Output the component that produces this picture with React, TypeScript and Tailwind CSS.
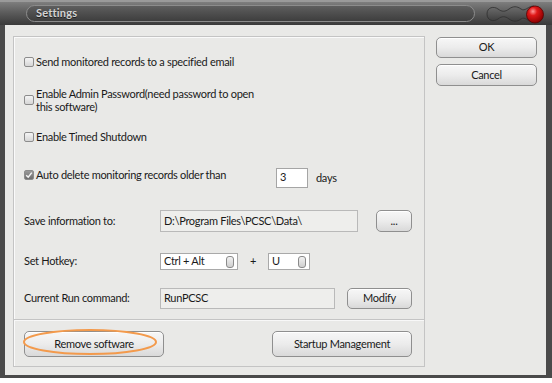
import React from "react";

const font = { fontFamily: 'Lato, "Open Sans", "Liberation Sans", sans-serif', letterSpacing: "-0.3px" };

function Checkbox({ checked = false }: { checked?: boolean }) {
  return (
    <div
      className={
        "w-[10px] h-[10px] shrink-0 rounded-[2px] border border-[#8c8c8c] flex items-center justify-center " +
        (checked ? "bg-gradient-to-b from-[#9a9a9a] to-[#6e6e6e]" : "bg-gradient-to-b from-[#f4f4f4] to-[#d6d6d6]")
      }
    >
      {checked && (
        <svg width="8" height="8" viewBox="0 0 8 8">
          <path d="M1.2 4.2 L3.2 6.2 L6.8 1.6" fill="none" stroke="#f4f4f4" strokeWidth="1.5" />
        </svg>
      )}
    </div>
  );
}

function Btn({ children, className = "" }: { children: React.ReactNode; className?: string }) {
  return (
    <div
      className={
        "flex items-center justify-center rounded-[5px] border border-[#8f8f8f] bg-gradient-to-b from-[#f7f7f7] via-[#ececec] to-[#d9d9d9] text-[11px] text-[#1a1a1a] shadow-[inset_0_1px_0_#ffffff] " +
        className
      }
    >
      {children}
    </div>
  );
}

function Combo({ text, className = "" }: { text: string; className?: string }) {
  return (
    <div className={"h-[17px] bg-white border border-[#a9a9a9] flex items-center justify-between pl-[3px] pr-[3px] text-[11px] text-[#1a1a1a] " + className}>
      <span>{text}</span>
      <div className="w-[8px] h-[12px] rounded-[3px] border border-[#8a8a8a] bg-gradient-to-b from-[#f2f2f2] to-[#cfcfcf]" />
    </div>
  );
}

export default function App() {
  return (
    <div className="w-[552px] h-[383px] bg-white overflow-hidden flex flex-col" style={font}>
      {/* Title bar */}
      <div className="h-[25px] shrink-0 relative bg-gradient-to-b from-[#7e7e7e] via-[#595959] to-[#3a3a3a] border-t-2 border-[#9a9a9a] flex items-center">
        <div className="ml-[26px] w-[449px] h-[17px] rounded-full border border-[#8c8c8c] bg-gradient-to-b from-[#5e5e5e] to-[#3e3e3e] flex items-center pl-[9px]">
          <span className="text-[11px] font-bold text-[#d4d4d4] [text-shadow:0_1px_0_#222]" style={{ letterSpacing: "0.2px" }}>
            Settings
          </span>
        </div>
        <svg className="absolute left-[484px] top-[0px]" width="64" height="23" viewBox="0 0 64 23">
          <defs>
            <linearGradient id="wv" x1="0" y1="0" x2="0" y2="1">
              <stop offset="0" stopColor="#6e6e6e" />
              <stop offset="0.5" stopColor="#555555" />
              <stop offset="1" stopColor="#3a3a3a" />
            </linearGradient>
            <radialGradient id="rd" cx="0.38" cy="0.32" r="0.7">
              <stop offset="0" stopColor="#ff9a9a" />
              <stop offset="0.35" stopColor="#e01818" />
              <stop offset="1" stopColor="#8a0000" />
            </radialGradient>
          </defs>
          <path
            d="M3 12 C3 5 10 4 14 7 C18 10 21 10 25 7 C29 4 33 4 37 7 C41 10 44 4 50 4 L50 20 C44 20 41 14 37 17 C33 20 29 20 25 17 C21 14 18 14 14 17 C10 20 3 19 3 12 Z"
            fill="url(#wv)"
            stroke="#2e2e2e"
            strokeWidth="0.8"
          />
          <circle cx="51" cy="12.5" r="8.5" fill="url(#rd)" stroke="#5a0000" strokeWidth="0.8" />
        </svg>
      </div>

      {/* Body */}
      <div className="h-[353px] shrink-0 bg-[#e9e9e7] border-l-[5px] border-r-[6px] border-b-[3px] border-[#4a4a4a] flex pl-[8px] pt-[11px] text-[11px] text-[#1a1a1a]">
        {/* Group box */}
        <div className="w-[412px] h-[331px] border border-[#c4c4c4] shadow-[inset_1px_1px_0_#fafafa] flex flex-col">
          <div className="pl-[10px] flex flex-col">
            <div className="mt-[15px] h-[20px] flex items-center gap-[2px]">
              <Checkbox />
              <span>Send monitored records to a specified email</span>
            </div>
            <div className="mt-[15px] h-[26px] flex items-center gap-[2px]">
              <Checkbox />
              <span className="leading-[13px]">
                Enable Admin Password(need password to open
                <br />
                this software)
              </span>
            </div>
            <div className="mt-[14px] h-[20px] flex items-center gap-[2px]">
              <Checkbox />
              <span>Enable Timed Shutdown</span>
            </div>
            <div className="mt-[21px] h-[20px] flex items-start">
              <div className="w-[252px] flex items-center gap-[2px] mt-[2px] h-[10px]">
                <Checkbox checked />
                <span>Auto delete monitoring records older than</span>
              </div>
              <div className="w-[32px] h-[20px] bg-white border border-[#a5a5a5] pl-[3px] leading-[16px]">3</div>
              <span className="ml-[8px] self-center mt-[1px]">days</span>
            </div>
            <div className="mt-[22px] h-[22px] flex items-center">
              <span className="w-[136px]">Save information to:</span>
              <div className="w-[198px] h-[22px] bg-[#eeeeec] border border-[#b9b9b9] flex items-center pl-[3px]">
                D:\Program Files\PCSC\Data\
              </div>
              <Btn className="ml-[18px] w-[36px] h-[22px]">...</Btn>
            </div>
            <div className="mt-[21px] h-[17px] flex items-center">
              <span className="w-[136px]">Set Hotkey:</span>
              <Combo text="Ctrl + Alt" className="w-[78px]" />
              <span className="w-[30px] text-center">+</span>
              <Combo text="U" className="w-[42px]" />
            </div>
            <div className="mt-[18px] h-[21px] flex items-center">
              <span className="w-[136px]">Current Run command:</span>
              <div className="w-[175px] h-[21px] bg-[#eeeeec] border border-[#b9b9b9] pl-[3px] leading-[17px]">RunPCSC</div>
              <Btn className="ml-[12px] w-[65px] h-[21px]">Modify</Btn>
            </div>
          </div>
          <div className="mt-[10px] h-[2px] border-t border-[#c4c4c4] border-b border-b-[#f8f8f8]" />
          <div className="mt-[10px] pl-[10px] flex items-center">
            <div className="relative">
              <Btn className="w-[140px] h-[26px] text-[11px]">Remove software</Btn>
              <svg className="absolute left-[-2px] top-[-3px]" width="138" height="30" viewBox="0 0 138 30">
                <ellipse cx="68" cy="14" rx="66" ry="12" fill="none" stroke="#f39a4c" strokeWidth="2" />
              </svg>
            </div>
            <Btn className="ml-[108px] w-[140px] h-[26px]">Startup Management</Btn>
          </div>
        </div>
        {/* Right buttons */}
        <div className="ml-[11px] mt-[1px] flex flex-col gap-[6px]">
          <Btn className="w-[101px] h-[21px]">OK</Btn>
          <Btn className="w-[101px] h-[22px]">Cancel</Btn>
        </div>
      </div>
    </div>
  );
}
